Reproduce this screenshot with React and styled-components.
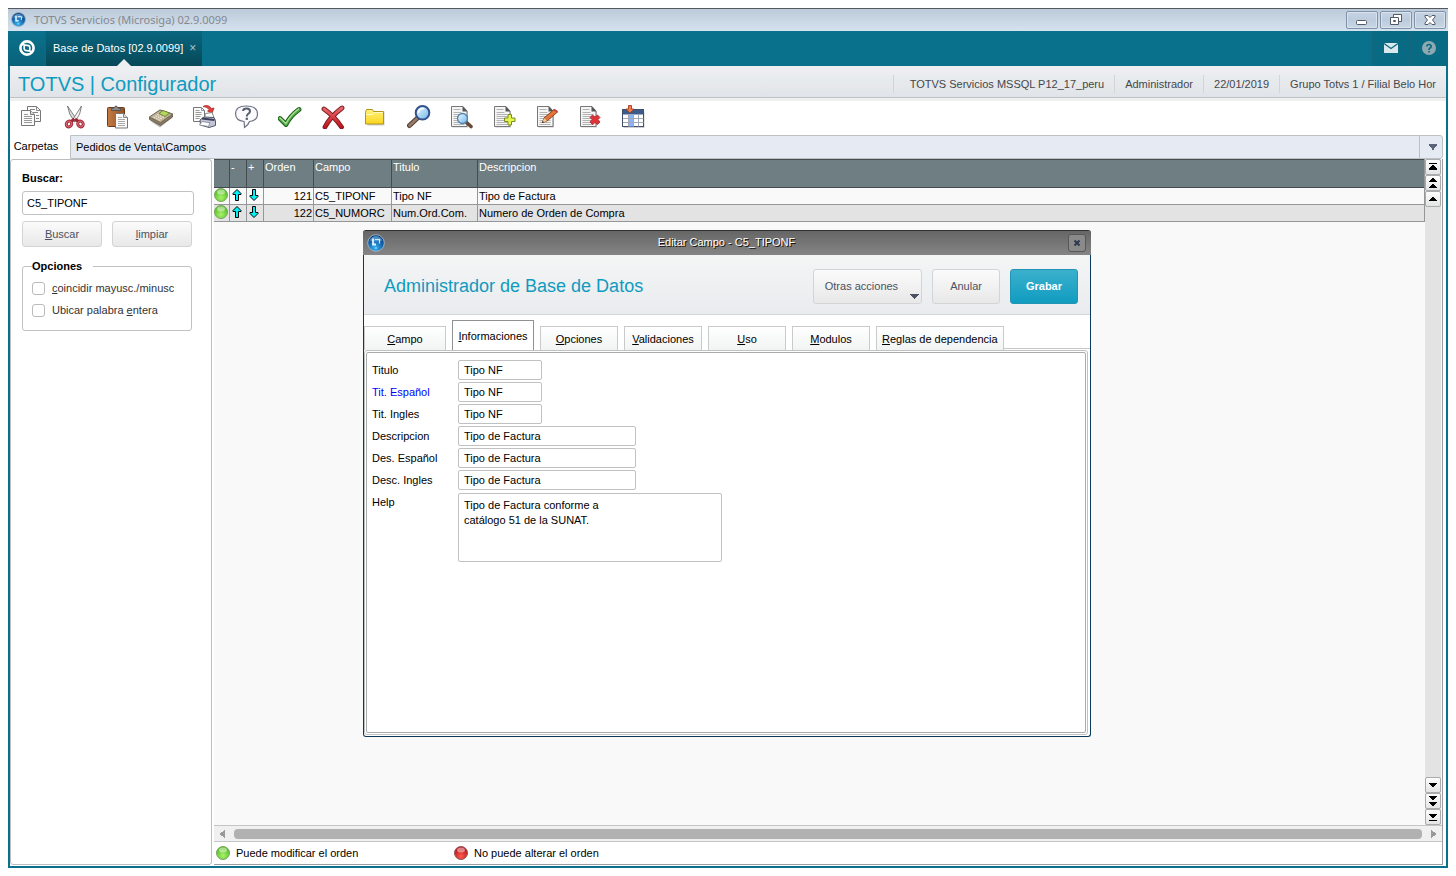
import React, { useState } from "react";
import styled, { createGlobalStyle, css } from "styled-components";

const GlobalStyle = createGlobalStyle`
  *, *::before, *::after { box-sizing: border-box; }
  body {
    margin: 0;
    background: #fff;
    color: #000;
    font: 11px/14px "Liberation Sans", Arial, sans-serif;
  }
  button, input, textarea { font: inherit; color: inherit; }
  button { padding: 0; cursor: pointer; }
  svg { display: block; flex: none; }
`;

/* ---------- application window ---------- */

const Desktop = styled.div`
  display: flex;
  min-height: 100vh;
  padding: 8px;
`;

const AppWindow = styled.div`
  position: relative;
  flex: 1;
  min-width: 0;
  display: flex;
  flex-direction: column;
  border: solid #0a718d;
  border-width: 0 2px 2px;
`;

const TitleBar = styled.header`
  display: flex;
  align-items: center;
  height: 23px;
  margin: 0 -2px;
  padding: 0 2px 1px 3px;
  border-top: 1px solid #55595e;
  background: linear-gradient(#bccad9, #d5e2ef);
`;

const WindowTitle = styled.span`
  flex: 1;
  margin-left: 8px;
  color: #85898f;
  font: 11px/18px "Noto Sans", sans-serif;
`;

const WindowButtons = styled.div`
  display: flex;
  gap: 2px;
`;

const WindowButton = styled.button`
  display: grid;
  place-items: center;
  width: 32px;
  height: 18px;
  border: 1px solid #8091a8;
  border-radius: 2px;
  background: linear-gradient(#c5d3e3, #bdccdd 50%, #c9d7e6);
  box-shadow: inset 0 0 0 1px #d8e3ee;
`;

const ModuleBar = styled.nav`
  display: flex;
  height: 35px;
  margin: 0 -2px;
  background: #0a718d;
`;

const HomeButton = styled.button`
  display: grid;
  place-items: center;
  width: 38px;
  padding-bottom: 2px;
  border: 0;
  border-right: 1px solid #1b6478;
  background: linear-gradient(#0b718c, #096279);
`;

const ModuleTab = styled.div`
  position: relative;
  display: flex;
  align-items: center;
  gap: 6px;
  padding: 0 6px 2px 7px;
  color: #fff;
  background: linear-gradient(#09667f, #064858);

  &::after {
    content: "";
    position: absolute;
    bottom: 0;
    left: 50%;
    margin-left: -7px;
    border: solid transparent;
    border-width: 0 7px 7px;
    border-bottom-color: #eceeef;
  }
`;

const ModuleName = styled.a`
  color: inherit;
  text-decoration: none;
`;

const CloseTab = styled.button`
  border: 0;
  background: none;
  color: #a9c4cc;
  font-size: 12px;
`;

const ModuleActions = styled.div`
  display: flex;
  margin-left: auto;
`;

const ModuleAction = styled.button`
  display: grid;
  place-items: center;
  width: 38px;
  padding: 0 2px 2px 0;
  border: 0;
  border-left: 1px solid #14677d;
  background: #096a84;
`;

const ProductBar = styled.div`
  display: flex;
  align-items: center;
  height: 35px;
  padding: 3px 10px 0 8px;
  border-bottom: 3px solid #eef0f0;
  background: linear-gradient(#eef0f3, #e0e3e7);
  box-shadow: inset 0 -1px 0 #bfc3c6;
`;

const ProductName = styled.h1`
  flex: 1;
  margin: 0;
  color: #0f9bc0;
  font-size: 20px;
  font-weight: 400;
  line-height: 24px;
`;

const Session = styled.ul`
  display: flex;
  margin: 0;
  padding: 0;
  list-style: none;
  color: #44474b;
  line-height: 18px;
`;

const SessionItem = styled.li`
  padding: 0 10px;
  border-left: 1px solid #d2d5d7;
  &:first-child { padding-left: 16px; }
  &:last-child { padding-right: 0; }
`;

const Toolbar = styled.div`
  display: flex;
  height: 34px;
`;

const Tool = styled.button`
  display: grid;
  place-items: center;
  width: 43px;
  height: 31px;
  border: 0;
  background: none;
`;

const FolderTabs = styled.div`
  display: flex;
  height: 24px;
  padding-right: 3px;
`;

const ActiveFolder = styled.button`
  width: 60px;
  padding: 0 8px 2px 0;
  border: 0;
  background: #fff;
`;

const FolderPath = styled.div`
  flex: 1;
  display: flex;
  align-items: center;
  border: 1px solid #bdc1c4;
  border-radius: 0 3px 3px 0;
  background: #e6eaf2;
  padding-left: 5px;
`;

const FolderMenu = styled.button`
  display: grid;
  place-items: center;
  width: 23px;
  height: 22px;
  margin-left: auto;
  border: 0;
  border-left: 1px solid #bdc1c4;
  background: none;
  padding-left: 4px;
`;

const Workspace = styled.div`
  flex: 1;
  display: flex;
  gap: 2px;
  padding: 0 3px 1px 0;
`;

/* ---------- search panel ---------- */

const SearchPanel = styled.form`
  width: 202px;
  padding: 10px 17px 0 11px;
  border: 1px solid #bcbfc0;
  border-radius: 3px;
  background: #fff;
`;

const SearchLabel = styled.label`
  display: block;
  margin-bottom: 5px;
  font-weight: 700;
  line-height: 16px;
`;

const SearchInput = styled.input`
  display: block;
  width: 100%;
  height: 24px;
  padding: 0 4px;
  border: 1px solid #bfc1c2;
  border-radius: 3px;
  background: #fff;
`;

const SearchButtons = styled.div`
  display: flex;
  gap: 10px;
  margin: 6px 2px 12px 0;
`;

const softButton = css`
  border: 1px solid #d3d4d5;
  border-radius: 3px;
  background: linear-gradient(#fbfbfb, #e8e8e9);
  color: #4b5261;
`;

const SearchButton = styled.button`
  ${softButton}
  flex: 1;
  height: 26px;
`;

const OptionsGroup = styled.fieldset`
  min-width: 0;
  height: 72px;
  margin: 0 2px 0 0;
  padding: 8px 9px 0;
  border: 1px solid #bfc1c2;
  border-radius: 3px;
`;

const GroupTitle = styled.legend`
  padding: 0 11px 0 0;
  font-weight: 700;
  line-height: 14px;
`;

const CheckOption = styled.label`
  display: flex;
  align-items: center;
  gap: 7px;
  height: 14px;
  margin-bottom: 8px;
  color: #333;
  white-space: nowrap;
`;

const CheckBox = styled.input`
  appearance: none;
  flex: none;
  width: 13px;
  height: 13px;
  margin: 0;
  border: 1px solid #b9bbbd;
  border-radius: 3px;
  background: #fff;
  &:checked { background: #1a9fc2; }
`;

/* ---------- field grid ---------- */

const GridPanel = styled.section`
  flex: 1;
  min-width: 0;
  display: flex;
  flex-direction: column;
  border: solid #9b9ea0;
  border-width: 0 1px 1px 0;
`;

const GridArea = styled.div`
  flex: 1;
  display: flex;
  background: #f9f9f9;
`;

const GridTable = styled.div`
  flex: 1;
  min-width: 0;
`;

const FieldTable = styled.table`
  width: 100%;
  table-layout: fixed;
  border-collapse: separate;
  border-spacing: 0;
  border-right: 1px solid #94979a;
`;

const HeadCell = styled.th`
  height: 29px;
  padding: 0 1px;
  border: solid #454c50;
  border-width: 1px 1px 1px 0;
  background: #6f7e82;
  color: #fff;
  font-weight: 400;
  text-align: left;
  vertical-align: top;
  &:last-child { border-right: 0; }
`;

const FieldRow = styled.tr`
  background: ${(p) => (p.$shaded ? "#e3e3e3" : "#f9f9f9")};
`;

const Cell = styled.td`
  height: 17px;
  padding: 0 1px;
  border: solid #94979a;
  border-width: 0 1px 1px 0;
  line-height: 16px;
  text-align: ${(p) => (p.$end ? "right" : "left")};
  white-space: nowrap;
  &:last-child { border-right: 0; }
`;

const IconCell = styled(Cell)`
  padding: 0;
  vertical-align: top;
  & > button { margin: 0 auto 0 2px; }
`;

const RowMove = styled.button`
  display: block;
  border: 0;
  background: none;
`;

const VerticalScroll = styled.div`
  display: flex;
  flex-direction: column;
  width: 17px;
  padding-right: 1px;
  border-right: 1px solid #f9f9f9;
  background: #e3e3e3;
`;

const ScrollTrack = styled.div`
  flex: 1;
`;

const ScrollButton = styled.button`
  display: grid;
  place-items: center;
  width: 16px;
  height: 16px;
  border: 1px solid #a9abac;
  border-radius: 2px;
  background: linear-gradient(#fdfdfd, #e4e4e4);
`;

const HorizontalScroll = styled.div`
  display: flex;
  align-items: center;
  justify-content: space-between;
  height: 17px;
  padding: 0 5px;
  gap: 9px;
  border: solid #c3c5c6;
  border-width: 1px 0;
  background: #f0f0f0;
`;

const ScrollArrow = styled.button`
  border: 0;
  background: none;
`;

const ScrollThumb = styled.div`
  flex: 1;
  height: 10px;
  border-radius: 4px;
  background: #b1b1b1;
`;

const Legend = styled.footer`
  display: flex;
  height: 22px;
  padding-left: 2px;
  background: #fff;
`;

const LegendItem = styled.div`
  display: flex;
  align-items: center;
  gap: 5px;
  width: 238px;
`;

/* ---------- edit dialog ---------- */

const DialogLayer = styled.div`
  position: absolute;
  inset: 222px 0 auto;
  display: flex;
  justify-content: center;
  padding-right: 2px;
  pointer-events: none;
`;

const Dialog = styled.section`
  display: flex;
  flex-direction: column;
  width: 728px;
  min-height: 507px;
  border: 1px solid #0b3a59;
  border-top-color: #303030;
  border-radius: 3px;
  background: #fff;
  pointer-events: auto;
`;

const DialogBar = styled.header`
  display: flex;
  align-items: center;
  height: 24px;
  margin: 0 -1px;
  padding: 0 5px 0 4px;
  border-radius: 2px 2px 0 0;
  background: linear-gradient(#666, #858585);
`;

const DialogTitle = styled.h2`
  flex: 1;
  margin: 0;
  padding-bottom: 2px;
  color: #fff;
  font-size: 11px;
  font-weight: 400;
  line-height: 14px;
  text-align: center;
  text-shadow: 1px 1px 0 #111;
`;

const DialogClose = styled.button`
  display: grid;
  place-items: center;
  width: 18px;
  height: 18px;
  border: 1px solid #55585a;
  border-radius: 3px;
  background: #8a8a8a;
`;

const DialogHead = styled.div`
  display: flex;
  align-items: center;
  gap: 10px;
  height: 60px;
  padding: 3px 12px 0 20px;
  border-bottom: 1px solid #d5d7d8;
  background: linear-gradient(#f4f5f5, #eaebee);
`;

const DialogHeading = styled.h3`
  flex: 1;
  margin: 0;
  color: #0f9bc0;
  font-size: 18px;
  font-weight: 400;
  line-height: 24px;
`;

const ActionButton = styled.button`
  ${softButton}
  height: 35px;
  padding: 0 17px;
  ${(p) =>
    p.$primary &&
    css`
      padding: 0 15px;
      border-color: #2394b3;
      background: linear-gradient(#3bb0cd, #109cc0);
      color: #fff;
      font-weight: 700;
    `}
`;

const MenuButton = styled(ActionButton)`
  display: flex;
  align-items: center;
  gap: 11px;
  padding: 0 2px 0 11px;
  & > svg { align-self: flex-end; margin: 0 0 4px; }
`;

const TabStrip = styled.div`
  display: flex;
  align-items: flex-end;
  gap: 6px;
  height: 35px;
`;

const TabButton = styled.button`
  min-width: ${(p) => (p.$wide ? 82 : 78)}px;
  height: 24px;
  padding: 0 5px;
  border: 1px solid #c8cacb;
  border-bottom: 0;
  background: linear-gradient(#fff, #f2f3f3);
  white-space: nowrap;
  ${(p) =>
    p.$active &&
    css`
      height: 30px;
      border-color: #8f9294;
      background: #fff;
    `}
`;

const TabRule = styled.div`
  flex: 1;
  height: 2px;
  margin-left: -6px;
  border-top: 1px solid #c3c5c6;
`;

const TabPage = styled.div`
  flex: 1;
  display: flex;
  margin: 0 2px 1px 0;
  padding: 1px;
  border: 1px solid #bfc1c2;
  border-radius: 3px;
`;

const FieldForm = styled.form`
  flex: 1;
  display: flex;
  flex-direction: column;
  gap: 2px;
  padding: 7px 5px;
  border: 1px solid #a9acad;
  border-radius: 2px;
`;

const FormRow = styled.div`
  display: flex;
`;

const FormLabel = styled.label`
  width: 86px;
  line-height: 20px;
  color: ${(p) => (p.$required ? "#00f" : "#000")};
`;

const formControl = css`
  border: 1px solid #bfc1c2;
  border-radius: 2px;
  background: #fff;
`;

const FormInput = styled.input`
  ${formControl}
  width: ${(p) => (p.$long ? 178 : 84)}px;
  height: 20px;
  padding: 0 5px;
`;

const FormText = styled.textarea`
  ${formControl}
  width: 264px;
  height: 69px;
  margin-top: 1px;
  padding: 4px 5px;
  line-height: 15px;
  resize: none;
`;

/* ---------- drawings ---------- */

const HiddenSvg = styled.svg`
  position: absolute;
`;

const Defs = () => (
  <HiddenSvg width="0" height="0" aria-hidden="true">
    <defs>
      <radialGradient id="globe" cx="45%" cy="80%" r="75%">
        <stop offset="0" stopColor="#35b4f0" /><stop offset=".6" stopColor="#1565b0" /><stop offset="1" stopColor="#0a3670" />
      </radialGradient>
      <radialGradient id="green" cx="50%" cy="70%" r="60%">
        <stop offset="0" stopColor="#a8f26a" /><stop offset="1" stopColor="#58bf2a" />
      </radialGradient>
      <radialGradient id="red" cx="50%" cy="75%" r="65%">
        <stop offset="0" stopColor="#ff5a4e" /><stop offset="1" stopColor="#b81418" />
      </radialGradient>
      <linearGradient id="lens" x1="0" y1="0" x2="1" y2="1">
        <stop offset="0" stopColor="#f0faff" /><stop offset="1" stopColor="#6fb5ea" />
      </linearGradient>
      <linearGradient id="folder" x1="0" y1="0" x2="0" y2="1">
        <stop offset="0" stopColor="#fff27a" /><stop offset="1" stopColor="#fbd51f" />
      </linearGradient>
      <linearGradient id="board" x1="0" y1="0" x2="1" y2="0">
        <stop offset="0" stopColor="#c47c46" /><stop offset="1" stopColor="#94501f" />
      </linearGradient>
      <linearGradient id="redStroke" x1="0" y1="0" x2="0" y2="1">
        <stop offset="0" stopColor="#e8686a" /><stop offset="1" stopColor="#c4131c" />
      </linearGradient>
    </defs>
  </HiddenSvg>
);

const Globe = ({ size }) => (
  <svg width={size} height={size} viewBox="0 0 18 18" aria-hidden="true">
    <circle cx="9" cy="9" r="8.3" fill="url(#globe)" stroke="#9db4c8" />
    <path d="M2.5 6.5Q5 2 9 2t6.500 4.500Q9 8.500 2.500 6.500z" fill="#7fc4f0" opacity=".55" />
    <path d="M6 4.500v6h3" fill="none" stroke="#e6f5ff" strokeWidth="1.800" />
    <path d="M8 5.500h4.500v4" fill="none" stroke="#cfe9fb" strokeWidth="1.200" />
    <circle cx="9" cy="14" r="1" fill="#7fd0ff" />
  </svg>
);

const Ball = ({ color }) => (
  <svg width="15" height="15" viewBox="0 0 15 15" aria-hidden="true">
    <circle cx="7" cy="7" r="6.500" fill={`url(#${color})`} stroke={color === "green" ? "#7ba562" : "#8d5a5a"} />
    <ellipse cx="7" cy="4" rx="4" ry="2.500" fill="#fff" opacity=".45" />
  </svg>
);

const MoveArrow = ({ down }) => (
  <svg width="10" height="14" viewBox="0 0 10 14" aria-hidden="true">
    <path
      d={down ? "M3.500 1.500h3v6h2.500v1L5 12.500 1 8.500v-1h2.500z" : "M3.500 12.500h3v-6h2.500v-1L5 1.500 1 5.500v1h2.500z"}
      fill="#00f0f5" stroke="#000" strokeWidth="1"
    />
  </svg>
);

const Triangle = ({ d, w = 8, h = 10, fill = "#000" }) => (
  <svg width={w} height={h} viewBox={`0 0 ${w} ${h}`} aria-hidden="true" shapeRendering="crispEdges">
    <path d={d} fill={fill} />
  </svg>
);

const Sheet = () => (
  <g>
    <path d="M2.500 2.500h11l4.500 5v15h-15.500z" fill="#8a8a8a" opacity=".45" />
    <path d="M1.500 1.500h11.500l4 4.500v15.500h-15.500z" fill="#f5f5f5" stroke="#777" />
    <path d="M12.500 1v5.500h5z" fill="#555" />
    <path d="M3.500 4.500h7M3.500 7.500h8M3.500 9.500h11M3.500 11.500h11M3.500 13.500h11M3.500 15.500h11M3.500 17.500h11M3.500 19.500h11" stroke="#b3b3b3" />
  </g>
);

const drawings = {
  copiar: (
    <g fill="#fbfbfb" stroke="#777">
      <path d="M7.500 1.500h9l4 4v11h-13z" />
      <path d="M16.500 1.500v4h4M10 4.500h5M10 7.500h8M16 10.500h3M16 13.500h3" fill="none" stroke="#888" />
      <path d="M1.500 5.500h9l4 4v11h-13z" /><path d="M10.500 5.500v4h4" fill="#ddd" />
      <path d="M4 9.500h4M4 11.500h8M4 13.500h8M4 15.500h8M4 17.500h8" stroke="#999" />
    </g>
  ),
  cortar: (
    <g>
      <path d="M4.500 1l9.500 14-2.500 2Q5.500 9 4.500 1z" fill="#ddd" stroke="#666" strokeWidth=".8" />
      <path d="M18.500 1L9.500 15l2.500 2Q18 9 18.500 1z" fill="#f5f5f5" stroke="#666" strokeWidth=".8" />
      <g fill="none" stroke="#9e2632" strokeWidth="3">
        <ellipse cx="6" cy="19" rx="2.600" ry="3" transform="rotate(35 6 19)" />
        <ellipse cx="17.500" cy="19" rx="2.600" ry="3" transform="rotate(-35 17.500 19)" />
        <path d="M8 16.500l3.500-2.500M15.500 16.500L12 14" />
      </g>
      <g fill="none" stroke="#e06b76" strokeWidth="1">
        <ellipse cx="6" cy="19" rx="2.600" ry="3" transform="rotate(35 6 19)" />
        <ellipse cx="17.500" cy="19" rx="2.600" ry="3" transform="rotate(-35 17.500 19)" />
      </g>
    </g>
  ),
  pegar: (
    <g>
      <rect x="1.500" y="2.500" width="17" height="19" rx="1" fill="url(#board)" stroke="#6b3a1c" />
      <path d="M5.500 5.500V3.500l2.500-.5Q10 -1 12 3l2.500.5v2z" fill="#888" stroke="#555" />
      <path d="M9.500 8.500h8l4 4v10.500h-12z" fill="#fafafa" stroke="#777" />
      <path d="M17.500 8.500v4h4" fill="#ddd" stroke="#888" />
      <path d="M12 12.500h4M12 14.500h7M12 16.500h7M12 18.500h7M12 20.500h7" stroke="#aaa" />
    </g>
  ),
  calculadora: (
    <g strokeLinejoin="round">
      <path d="M1 16L11 22.500 23.500 12.500V11L12 19z" fill="#777" opacity=".5" />
      <path d="M.5 12L11 5l12.500 4v3L11.500 20.500 .5 14.500z" fill="#877a62" stroke="#5f5645" strokeWidth=".8" />
      <path d="M.5 12L11 5l12.500 4L11.500 17.500z" fill="#c0b498" stroke="#6f6653" strokeWidth=".8" />
      <path d="M10 8.500L14 5.500 20.500 8 16 11.500z" fill="#b4d95a" stroke="#5f7336" strokeWidth=".8" />
      <path d="M4.500 12l7 3.500M6.500 10.700l7 3.500M8.500 9.500l6.500 3.200" stroke="#eee7d6" strokeWidth="1.200" strokeDasharray="1.700 1" />
    </g>
  ),
  imprimir: (
    <g>
      <path d="M1.500 2.500h8l3 3v11h-11z" fill="#fafafa" stroke="#777" />
      <path d="M9.500 2.500v3h3M3.500 5.500h4M3.500 7.500h6M3.500 9.500h6M3.500 11.500h5M3.500 13.500h4" stroke="#999" fill="none" />
      <path d="M11 1.500Q16-1.500 19.500 3.500L22 3l-2 5.500L15.500 6l2-1Q15 1.500 11 1.500z" fill="#e04038" stroke="#a51d1b" strokeWidth=".7" />
      <path d="M13.500 8.500l6.500-1 2 5-9.500 1z" fill="#fff" stroke="#888" />
      <path d="M8 15l4-3 10 .5 1.500 3v5L17 22.500 8.500 20z" fill="#c3c6d6" stroke="#56586a" />
      <path d="M10 13.500l12.500 1.500" stroke="#3c3f58" strokeWidth="1.800" />
      <path d="M10 16.500l8 1.200-1.500 3.800-9-1.500z" fill="#fff" stroke="#7d8098" strokeWidth=".8" />
    </g>
  ),
  ayuda: (
    <g>
      <path d="M11 1Q.6 1 .6 9q0 6.500 8.400 7.500.5 3 .5 6Q13.500 20 14.500 16.500 22.500 15.500 22.500 9 22.500 1 11 1z" fill="#fbfbfe" stroke="#6f7484" strokeWidth="1.200" />
      <path d="M8 6Q8.300 3.500 11.500 3.500 15 3.500 15 6.200q0 1.600-2 2.800-1.200.8-1.200 2.500" fill="none" stroke="#555c6e" strokeWidth="2" />
      <rect x="10.700" y="12.700" width="2.200" height="2.200" fill="#555c6e" />
    </g>
  ),
  confirmar: (
    <g fill="none" strokeLinecap="round" strokeLinejoin="round">
      <path d="M2 13.500l6 6Q12 11 21 4.500" stroke="#1e5c1b" strokeWidth="4.800" />
      <path d="M2 13.500l6 6Q12 11 21 4.500" stroke="#4fae43" strokeWidth="2.900" />
      <path d="M2 13l6 5.500Q12 10.500 20.500 4" stroke="#b0dfa0" strokeWidth="1.200" />
    </g>
  ),
  cancelar: (
    <g fill="none" strokeLinecap="round">
      <path d="M3 4q10 7 17.500 18M21 3Q9 12 4 22" stroke="#7c1a20" strokeWidth="4.800" />
      <path d="M3 4q10 7 17.500 18M21 3Q9 12 4 22" stroke="url(#redStroke)" strokeWidth="2.900" />
    </g>
  ),
  carpeta: (
    <g>
      <path d="M3.500 6.500h17v14h-17z" fill="#888" opacity=".4" />
      <path d="M1.500 7.500l1-3h6l1 2h10v12.500h-18z" fill="url(#folder)" stroke="#b29521" />
      <path d="M2 9.500h6.500l1.500-2h9" fill="none" stroke="#fffbc6" />
    </g>
  ),
  buscar: (
    <g strokeLinecap="round">
      <path d="M2.500 20.500L10 13.500" stroke="#54453c" strokeWidth="5" />
      <path d="M2.500 20.500L10 13.500" stroke="#9a7a65" strokeWidth="2.600" />
      <circle cx="15.500" cy="7.800" r="6.800" fill="url(#lens)" stroke="#32528c" strokeWidth="2" />
      <path d="M11.500 7Q12.500 3.500 16.500 3.500" fill="none" stroke="#fff" strokeWidth="1.600" />
    </g>
  ),
  visualizar: (
    <g>
      <Sheet />
      <path d="M16.500 17.500l4.500 4" stroke="#66493a" strokeWidth="3.600" strokeLinecap="round" />
      <circle cx="12.500" cy="13.500" r="5" fill="url(#lens)" stroke="#5283ac" strokeWidth="1.300" />
    </g>
  ),
  incluir: (
    <g>
      <Sheet />
      <path d="M15 9.500h3.500v3.500H22v3.500h-3.500V20H15v-3.500h-3.500V13H15z" fill="#e4f64b" stroke="#798c22" />
    </g>
  ),
  modificar: (
    <g>
      <Sheet />
      <path d="M6.500 17.500L8 13 18 4.500l3.500 2.500L11 16z" fill="#e2763a" stroke="#8b4320" />
      <path d="M18 4.500l3.500 2.500" stroke="#c4473c" strokeWidth="2" />
      <path d="M8 13l3 3-4.500 1.500z" fill="#f0cf9d" /><path d="M6 18l2-.8-1.200-1.200z" fill="#222" />
    </g>
  ),
  borrar: (
    <g>
      <Sheet />
      <path d="M13.500 10l2.500 2 2.500-2 2.500 2.500-2 2 2 2.500-2.500 2.500-2.500-2-2.500 2-2.500-2.500 2-2.500-2-2z" fill="#e0343a" stroke="#a52326" strokeWidth=".8" />
    </g>
  ),
  columnas: (
    <g>
      <path d="M1.500 6.500h21v16.500h-21z" fill="#888" opacity=".4" />
      <rect x=".5" y="4.500" width="21" height="17" fill="#fff" stroke="#43506c" />
      <path d="M1 5h20.500v4.500H1z" fill="#3c5a8a" />
      <path d="M6.500 10h5v11.500h-5z" fill="#8cb4fa" />
      <path d="M1 13.500h20.500M1 17.500h20.500M6.500 10v11.500M11.500 10v11.500M16.500 10v11.500" stroke="#a0a7b8" />
      <path d="M6.500.5h3V4H12L8 8 4 4h2.500z" fill="#f47a4a" stroke="#a0401f" strokeWidth=".9" />
    </g>
  ),
};

const scrollShapes = {
  first: "M0 1h8v1H0zM3 3h2v1h1v1h1v1h1v2H0V6h1V5h1V4h1z",
  pageUp: "M3 0h2v1h1v1h1v1h1v1H0V3h1V2h1V1h1zM3 6h2v1h1v1h1v1h1v1H0V9h1V8h1V7h1z",
  up: "M3 3h2v1h1v1h1v1h1v1H0V6h1V5h1V4h1z",
  down: "M0 3h8v1H7v1H6v1H5v1H3V6H2V5H1V4H0z",
  pageDown: "M0 0h8v1H7v1H6v1H5v1H3V3H2V2H1V1H0zM0 6h8v1H7v1H6v1H5v1H3V9H2V8H1V7H0z",
  last: "M0 2h8v1H7v1H6v1H5v1H3V5H2V4H1V3H0zM0 8h8v1H0z",
};

/* ---------- data ---------- */

const session = ["TOTVS Servicios MSSQL P12_17_peru", "Administrador", "22/01/2019", "Grupo Totvs 1 / Filial Belo Hor"];

const columns = [
  { title: "", width: 16 },
  { title: "-", width: 17 },
  { title: "+", width: 17 },
  { title: "Orden", width: 50 },
  { title: "Campo", width: 78 },
  { title: "Titulo", width: 86 },
  { title: "Descripcion" },
];

const fields = [
  { order: 121, name: "C5_TIPONF", title: "Tipo NF", description: "Tipo de Factura" },
  { order: 122, name: "C5_NUMORC", title: "Num.Ord.Com.", description: "Numero de Orden de Compra" },
];

const dialogTabs = [
  { key: "C", rest: "ampo", wide: true },
  { key: "I", rest: "nformaciones", wide: true },
  { key: "O", rest: "pciones" },
  { key: "V", rest: "alidaciones" },
  { key: "U", rest: "so" },
  { key: "M", rest: "odulos" },
  { key: "R", rest: "eglas de dependencia" },
];

const formFields = [
  { id: "titulo", label: "Titulo", value: "Tipo NF" },
  { id: "tit-es", label: "Tit. Español", value: "Tipo NF", required: true },
  { id: "tit-en", label: "Tit. Ingles", value: "Tipo NF" },
  { id: "desc", label: "Descripcion", value: "Tipo de Factura", long: true },
  { id: "des-es", label: "Des. Español", value: "Tipo de Factura", long: true },
  { id: "des-en", label: "Desc. Ingles", value: "Tipo de Factura", long: true },
];

const stop = (e) => e.preventDefault();

function EditDialog() {
  const [active, setActive] = useState("I");
  return (
    <DialogLayer>
      <Dialog role="dialog" aria-labelledby="dialog-title">
        <DialogBar>
          <Globe size={18} />
          <DialogTitle id="dialog-title">Editar Campo - C5_TIPONF</DialogTitle>
          <DialogClose aria-label="Cerrar">
            <svg width="8" height="8" viewBox="0 0 8 8" aria-hidden="true">
              <path d="M1.500 1.500l5 5M6.500 1.500l-5 5" stroke="#303850" strokeWidth="2" />
            </svg>
          </DialogClose>
        </DialogBar>
        <DialogHead>
          <DialogHeading>Administrador de Base de Datos</DialogHeading>
          <MenuButton>
            Otras acciones
            <Triangle w={10} h={5} d="M0 0h10L5 5z" fill="#4b5261" />
          </MenuButton>
          <ActionButton>Anular</ActionButton>
          <ActionButton $primary>Grabar</ActionButton>
        </DialogHead>
        <TabStrip role="tablist">
          {dialogTabs.map((t) => (
            <TabButton
              key={t.key}
              role="tab"
              aria-selected={active === t.key}
              $active={active === t.key}
              $wide={t.wide}
              onClick={() => setActive(t.key)}
            >
              <u>{t.key}</u>{t.rest}
            </TabButton>
          ))}
          <TabRule />
        </TabStrip>
        <TabPage role="tabpanel">
          <FieldForm onSubmit={stop}>
            {formFields.map((f) => (
              <FormRow key={f.id}>
                <FormLabel htmlFor={f.id} $required={f.required}>{f.label}</FormLabel>
                <FormInput id={f.id} defaultValue={f.value} $long={f.long} />
              </FormRow>
            ))}
            <FormRow>
              <FormLabel htmlFor="help">Help</FormLabel>
              <FormText id="help" defaultValue={"Tipo de Factura conforme a\ncatálogo 51 de la SUNAT."} />
            </FormRow>
          </FieldForm>
        </TabPage>
      </Dialog>
    </DialogLayer>
  );
}

export default function App() {
  return (
    <Desktop>
      <GlobalStyle />
      <Defs />
      <AppWindow>
        <TitleBar>
          <Globe size={15} />
          <WindowTitle>TOTVS Servicios (Microsiga) 02.9.0099</WindowTitle>
          <WindowButtons>
            <WindowButton aria-label="Minimizar">
              <svg width="12" height="12" viewBox="0 0 12 12" aria-hidden="true">
                <rect x=".5" y="6.500" width="10" height="4" rx="1" fill="#fff" stroke="#555b66" />
              </svg>
            </WindowButton>
            <WindowButton aria-label="Restaurar">
              <svg width="12" height="12" viewBox="0 0 12 12" fill="#fff" stroke="#555b66" aria-hidden="true">
                <path d="M3.500.5h8v7h-8z" /><path d="M.5 3.500h8v7h-8z" /><path d="M3.500 6.500h2v1h-2z" />
              </svg>
            </WindowButton>
            <WindowButton aria-label="Cerrar">
              <svg width="12" height="12" viewBox="0 0 12 12" aria-hidden="true">
                <path d="M1 1.500h3l2 2 2-2h3v1.500L8.500 6 11 9v1.500H8l-2-2-2 2H1V9l2.500-3L1 3z" fill="#fff" stroke="#555b66" />
              </svg>
            </WindowButton>
          </WindowButtons>
        </TitleBar>

        <ModuleBar>
          <HomeButton aria-label="Inicio">
            <svg width="18" height="18" viewBox="0 0 18 18" aria-hidden="true">
              <circle cx="9" cy="9" r="6.600" fill="none" stroke="#fff" strokeWidth="2.600" />
              <path d="M4 5.500l6.500 1.200q1.300.3 1.300 1.600V13M14 12.500l-6.500-1.200q-1.300-.3-1.300-1.600V5.500" fill="none" stroke="#fff" strokeWidth="1.700" />
            </svg>
          </HomeButton>
          <ModuleTab>
            <ModuleName href="#base">Base de Datos [02.9.0099]</ModuleName>
            <CloseTab aria-label="Cerrar ficha">×</CloseTab>
          </ModuleTab>
          <ModuleActions>
            <ModuleAction aria-label="Mensajes">
              <svg width="14" height="10" viewBox="0 0 14 10" aria-hidden="true">
                <path d="M0 0h14v10H0z" fill="#dbe8ec" /><path d="M0 .5l7 5 7-5" fill="none" stroke="#0a6a84" strokeWidth="1.300" />
              </svg>
            </ModuleAction>
            <ModuleAction aria-label="Ayuda">
              <svg width="14" height="14" viewBox="0 0 14 14" aria-hidden="true">
                <circle cx="7" cy="7" r="7" fill="#8fa9b1" />
                <path d="M4.800 5.500Q5 3.500 7 3.500t2.200 1.800Q9.200 6.500 7.800 7.200 7 7.700 7 9M7 10v1.600" fill="none" stroke="#096a84" strokeWidth="1.700" />
              </svg>
            </ModuleAction>
          </ModuleActions>
        </ModuleBar>

        <ProductBar>
          <ProductName>TOTVS | Configurador</ProductName>
          <Session>
            {session.map((s) => <SessionItem key={s}>{s}</SessionItem>)}
          </Session>
        </ProductBar>

        <Toolbar role="toolbar">
          {Object.entries(drawings).map(([name, drawing]) => (
            <Tool key={name} aria-label={name}>
              <svg width="24" height="24" viewBox="0 0 24 24" aria-hidden="true">{drawing}</svg>
            </Tool>
          ))}
        </Toolbar>

        <FolderTabs>
          <ActiveFolder>Carpetas</ActiveFolder>
          <FolderPath>
            Pedidos de Venta\Campos
            <FolderMenu aria-label="Más carpetas">
              <Triangle w={8} h={6} d="M0 0h8v1L5 5v1H3V5L0 1z" fill="#5c6478" />
            </FolderMenu>
          </FolderPath>
        </FolderTabs>

        <Workspace>
          <SearchPanel onSubmit={stop}>
            <SearchLabel htmlFor="search">Buscar:</SearchLabel>
            <SearchInput id="search" defaultValue="C5_TIPONF" />
            <SearchButtons>
              <SearchButton><u>B</u>uscar</SearchButton>
              <SearchButton type="reset"><u>l</u>impiar</SearchButton>
            </SearchButtons>
            <OptionsGroup>
              <GroupTitle>Opciones</GroupTitle>
              <CheckOption>
                <CheckBox type="checkbox" />
                <span><u>c</u>oincidir mayusc./minusc</span>
              </CheckOption>
              <CheckOption>
                <CheckBox type="checkbox" />
                <span>Ubicar palabra <u>e</u>ntera</span>
              </CheckOption>
            </OptionsGroup>
          </SearchPanel>

          <GridPanel>
            <GridArea>
              <GridTable>
                <FieldTable>
                  <colgroup>
                    {columns.map((c, i) => <col key={i} width={c.width} />)}
                  </colgroup>
                  <thead>
                    <tr>{columns.map((c, i) => <HeadCell key={i}>{c.title}</HeadCell>)}</tr>
                  </thead>
                  <tbody>
                    {fields.map((f, i) => (
                      <FieldRow key={f.order} $shaded={i % 2 === 1}>
                        <IconCell><Ball color="green" /></IconCell>
                        <IconCell><RowMove aria-label="Subir"><MoveArrow /></RowMove></IconCell>
                        <IconCell><RowMove aria-label="Bajar"><MoveArrow down /></RowMove></IconCell>
                        <Cell $end>{f.order}</Cell>
                        <Cell>{f.name}</Cell>
                        <Cell>{f.title}</Cell>
                        <Cell>{f.description}</Cell>
                      </FieldRow>
                    ))}
                  </tbody>
                </FieldTable>
              </GridTable>
              <VerticalScroll>
                {["first", "pageUp", "up"].map((n) => (
                  <ScrollButton key={n} aria-label={n}><Triangle d={scrollShapes[n]} /></ScrollButton>
                ))}
                <ScrollTrack />
                {["down", "pageDown", "last"].map((n) => (
                  <ScrollButton key={n} aria-label={n}><Triangle d={scrollShapes[n]} /></ScrollButton>
                ))}
              </VerticalScroll>
            </GridArea>
            <HorizontalScroll>
              <ScrollArrow aria-label="Izquierda"><Triangle w={6} h={8} d="M6 0v8L0 4z" fill="#999" /></ScrollArrow>
              <ScrollThumb />
              <ScrollArrow aria-label="Derecha"><Triangle w={6} h={8} d="M0 0v8l6-4z" fill="#999" /></ScrollArrow>
            </HorizontalScroll>
            <Legend>
              <LegendItem><Ball color="green" />Puede modificar el orden</LegendItem>
              <LegendItem><Ball color="red" />No puede alterar el orden</LegendItem>
            </Legend>
          </GridPanel>
        </Workspace>

        <EditDialog />
      </AppWindow>
    </Desktop>
  );
}
